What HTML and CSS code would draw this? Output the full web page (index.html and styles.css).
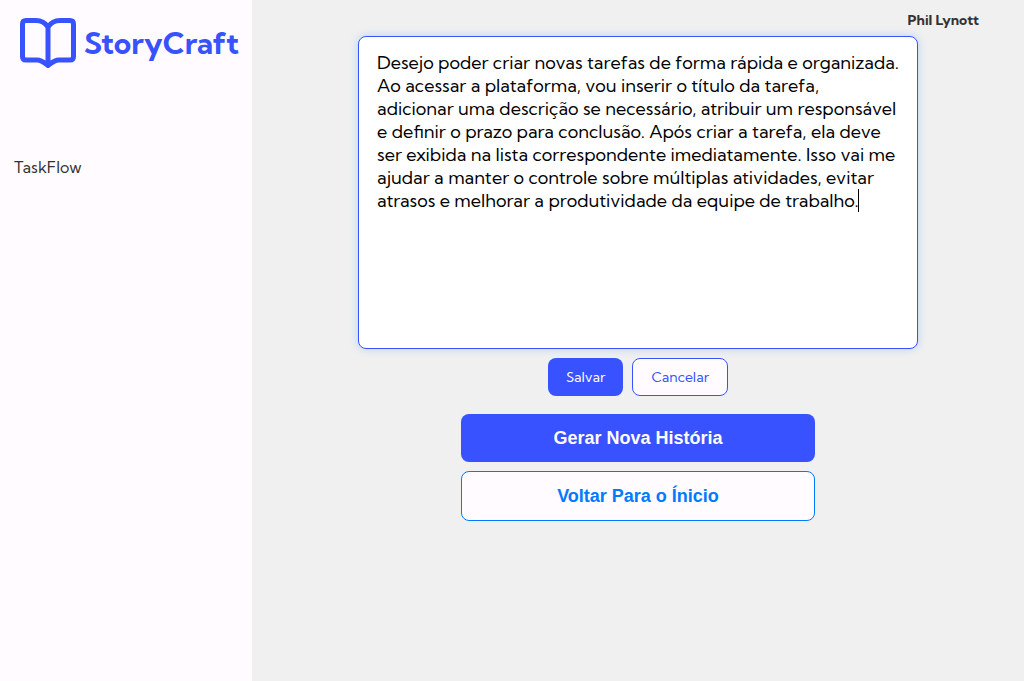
FILE: index.html
```html
<!DOCTYPE html>
<html lang="pt-BR">
<head>
<meta charset="utf-8">
<meta name="viewport" content="width=device-width, initial-scale=1">
<title>StoryCraft</title>
<link rel="stylesheet" href="styles.css">
</head>
<body class="app">
<aside class="sidebar">
  <div class="brand">
    <svg class="brand-icon" viewBox="0 0 56 51" aria-hidden="true">
      <path d="M28 9C25 4.500 21 2.500 16 2.500H6Q2.500 2.500 2.500 6V38.500Q2.500 42 6 42H17C21.500 42 25 45 28 47.500C31 45 34.500 42 39 42H50Q53.500 42 53.500 38.500V6Q53.500 2.500 50 2.500H40C35 2.500 31 4.500 28 9ZM28 9V47"/>
    </svg>
    <span class="brand-name">StoryCraft</span>
  </div>
  <nav class="projects"><a class="project" href="#">TaskFlow</a></nav>
</aside>
<div class="page">
  <header class="topbar"><span class="user">Phil Lynott</span></header>
  <main class="content">
    <form class="editor">
      <div class="story-field">
        <textarea class="story" aria-label="História" spellcheck="false">Desejo poder criar novas tarefas de forma rápida e organizada. Ao acessar a plataforma, vou inserir o título da tarefa, adicionar uma descrição se necessário, atribuir um responsável e definir o prazo para conclusão. Após criar a tarefa, ela deve ser exibida na lista correspondente imediatamente. Isso vai me ajudar a manter o controle sobre múltiplas atividades, evitar atrasos e melhorar a produtividade da equipe de trabalho.</textarea>
        <span class="caret" aria-hidden="true"></span>
      </div>
      <div class="editor-actions">
        <button class="button button-save" type="button">Salvar</button>
        <button class="button button-cancel" type="button">Cancelar</button>
      </div>
    </form>
    <div class="page-actions">
      <button class="wide wide-primary" type="button">Gerar Nova História</button>
      <button class="wide wide-outline" type="button">Voltar Para o Ínicio</button>
    </div>
  </main>
</div>
</body>
</html>
```
FILE: styles.css
```css
* {
  box-sizing: border-box;
}

.app {
  margin: 0;
  min-height: 100vh;
  display: flex;
  background: #f0f0f0;
  color: #333;
  font-family: "Kumbh Sans", Lato, sans-serif;
}

.sidebar {
  flex: 0 0 252px;
  background: #fffbff;
}

.brand {
  display: flex;
  align-items: center;
  gap: 8px;
  padding: 18px 0 0 20px;
  color: #3852ff;
}

.brand-icon {
  width: 56px;
  height: 51px;
  fill: none;
  stroke: currentColor;
  stroke-width: 5;
  stroke-linejoin: round;
}

.brand-name {
  padding-bottom: 2px;
  font-size: 30px;
  font-weight: 700;
  line-height: 40px;
}

.projects {
  padding: 88px 14px 0;
}

.project {
  color: #333;
  font-size: 16px;
  line-height: 20px;
  text-decoration: none;
}

.page {
  flex: 1;
  min-width: 0;
}

.topbar {
  display: flex;
  justify-content: flex-end;
  padding: 10px 45px 6px 0;
}

.user {
  font-size: 14px;
  font-weight: 700;
  line-height: 20px;
}

.content,
.editor,
.page-actions {
  display: flex;
  flex-direction: column;
  align-items: center;
}

.content {
  gap: 18px;
}

.editor {
  width: 100%;
  gap: 9px;
}

.story-field {
  position: relative;
  width: 100%;
  max-width: 560px;
}

.story {
  display: block;
  width: 100%;
  min-height: 313px;
  padding: 14px 18px;
  border: 1px solid #3852ff;
  border-radius: 8px;
  outline: none;
  resize: none;
  background: #fff;
  box-shadow: 0 0 8px rgba(0, 123, 255, 0.25);
  color: #000;
  font-family: inherit;
  font-size: 18px;
  line-height: 23px;
}

.caret {
  position: absolute;
  top: 153px;
  left: 500px;
  width: 1px;
  height: 23px;
  background: #000;
  pointer-events: none;
}

.editor-actions {
  display: flex;
  gap: 9px;
}

.button {
  height: 38px;
  padding: 0 18px;
  border-radius: 8px;
  font-family: inherit;
  font-size: 14px;
}

.button-save {
  border: 0;
  background: #3852ff;
  color: #fffbff;
}

.button-cancel {
  border: 1px solid #3852ff;
  background: #fffbff;
  color: #3852ff;
}

.page-actions {
  width: 100%;
  max-width: 354px;
  gap: 9px;
}

.wide {
  width: 100%;
  border-radius: 8px;
  font-family: "Liberation Sans", Arial, sans-serif;
  font-size: 18px;
  font-weight: 700;
  line-height: 20px;
}

.wide-primary {
  padding: 14px;
  border: 0;
  background: #3852ff;
  color: #fffbff;
}

.wide-outline {
  padding: 14px;
  border: 1px solid #007bff;
  background: #fffbff;
  color: #007bff;
}
```
